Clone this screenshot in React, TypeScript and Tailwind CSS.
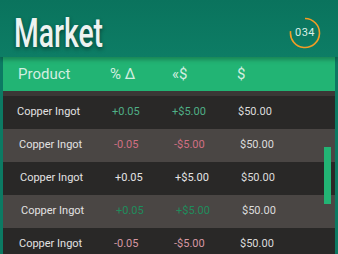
import React from "react";

type Row = {
  name: string;
  delta: string;
  change: string;
  price: string;
  tone: "up" | "down" | "plain" | "upDark" | "downSoft";
  shade: boolean;
  offset: string;
};

const rows: Row[] = [
  { name: "Copper Ingot", delta: "+0.05", change: "+$5.00", price: "$50.00", tone: "up", shade: false, offset: "pl-[14px]" },
  { name: "Copper Ingot", delta: "-0.05", change: "-$5.00", price: "$50.00", tone: "down", shade: true, offset: "pl-[16px]" },
  { name: "Copper Ingot", delta: "+0.05", change: "+$5.00", price: "$50.00", tone: "plain", shade: false, offset: "pl-[17px]" },
  { name: "Copper Ingot", delta: "+0.05", change: "+$5.00", price: "$50.00", tone: "upDark", shade: true, offset: "pl-[18px]" },
  { name: "Copper Ingot", delta: "-0.05", change: "-$5.00", price: "$50.00", tone: "downSoft", shade: false, offset: "pl-[16px]" },
];

const toneClass = {
  up: "text-[#4fae86]",
  down: "text-[#d06f82]",
  plain: "text-[#e4e4e4]",
  upDark: "text-[#1f8c5c]",
  downSoft: "text-[#d597a2]",
};

const Badge = () => (
  <div className="relative w-[32px] h-[32px] flex items-center justify-center mt-[8px]">
    <svg width="32" height="32" viewBox="0 0 32 32" className="absolute inset-0">
      <path
        d="M16 1.5 A14.5 14.5 0 1 1 1.6 14.2"
        fill="none"
        stroke="#f29c25"
        strokeWidth="1.6"
      />
    </svg>
    <span className="text-[11px] leading-none text-[#d9efe6] tracking-[0.5px]">034</span>
  </div>
);

export default function App() {
  return (
    <div
      className="relative w-[338px] h-[254px] overflow-hidden bg-[#0c7a63] flex flex-col"
      style={{ fontFamily: "Roboto, 'Liberation Sans', sans-serif" }}
    >
      <div className="h-[57px] shrink-0 flex items-center justify-between pl-[14px] pr-[17px] bg-gradient-to-b from-[#0a735d] to-[#0d7d65] shadow-[0_3px_4px_rgba(0,0,0,0.25)] z-10">
        <h1 className="text-[41px] font-medium leading-none text-[#eef3f1] origin-left scale-x-[0.69] mt-[9px] [text-shadow:0_2px_5px_rgba(0,0,0,0.45)]">
          Market
        </h1>
        <Badge />
      </div>
      <div className="flex-1 min-h-0 overflow-hidden mx-[3px] bg-[#292827] flex flex-col">
        <div className="h-[34px] shrink-0 bg-[#22b474] flex items-center pl-[15px] text-[15px] text-[#d2eee0]">
          <span className="w-[92px]">Product</span>
          <span className="w-[62px]">% Δ</span>
          <span className="w-[65px]">«$</span>
          <span>$</span>
        </div>
        <div className="h-[5px] shrink-0 bg-[#3b3736]" />
        {rows.map((r, i) => (
          <div
            key={i}
            className={`h-[33px] shrink-0 flex items-center text-[11px] ${r.offset} ${
              r.shade ? "bg-[#4a4644]" : "bg-[#292827]"
            }`}
          >
            <span className="w-[95px] text-[#e2e2e2]">{r.name}</span>
            <span className={`w-[60px] ${toneClass[r.tone]}`}>{r.delta}</span>
            <span className={`w-[66px] ${toneClass[r.tone]}`}>{r.change}</span>
            <span className="text-[#dcdcdc]">{r.price}</span>
          </div>
        ))}
      </div>
      <div className="absolute right-[7px] top-[147px] w-[7px] h-[57px] bg-[#22b474]" />
    </div>
  );
}
